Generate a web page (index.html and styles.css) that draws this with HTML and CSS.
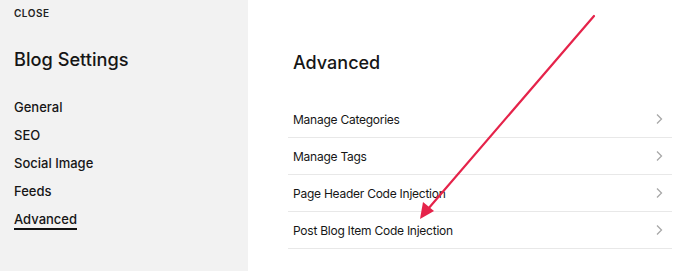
FILE: index.html
```html
<!DOCTYPE html>
<html>
<head>
<meta charset="utf-8">
<link rel="stylesheet" href="styles.css">
</head>
<body>
<div class="app">
  <aside class="side">
    <div class="close">CLOSE</div>
    <h1 class="side-title">Blog Settings</h1>
    <nav class="nav">
      <div class="nav-item">General</div>
      <div class="nav-item">SEO</div>
      <div class="nav-item">Social Image</div>
      <div class="nav-item">Feeds</div>
      <div class="nav-item active"><span>Advanced</span></div>
    </nav>
  </aside>
  <main class="main">
    <h2 class="main-title">Advanced</h2>
    <ul class="list">
      <li class="row"><span>Manage Categories</span><svg class="chev" viewBox="0 0 8 12" width="8" height="12"><path d="M2 1.5 L6.5 6 L2 10.5" fill="none" stroke="#a8a8a8" stroke-width="1.3"/></svg></li>
      <li class="row"><span>Manage Tags</span><svg class="chev" viewBox="0 0 8 12" width="8" height="12"><path d="M2 1.5 L6.5 6 L2 10.5" fill="none" stroke="#a8a8a8" stroke-width="1.3"/></svg></li>
      <li class="row"><span>Page Header Code Injection</span><svg class="chev" viewBox="0 0 8 12" width="8" height="12"><path d="M2 1.5 L6.5 6 L2 10.5" fill="none" stroke="#a8a8a8" stroke-width="1.3"/></svg></li>
      <li class="row"><span>Post Blog Item Code Injection</span><svg class="chev" viewBox="0 0 8 12" width="8" height="12"><path d="M2 1.5 L6.5 6 L2 10.5" fill="none" stroke="#a8a8a8" stroke-width="1.3"/></svg></li>
    </ul>
  </main>
  <svg class="arrow" width="700" height="271" viewBox="0 0 700 271">
    <line x1="594" y1="16" x2="428" y2="209" stroke="#e5234a" stroke-width="2.2" stroke-linecap="round"/>
    <path d="M420 219 L423 202 L434 211 Z" fill="#e5234a"/>
  </svg>
</div>
</body>
</html>
```
FILE: styles.css
```css
* { box-sizing: border-box; }
html, body { margin: 0; padding: 0; }
body {
  font-family: Inter, "Noto Sans", sans-serif;
  color: #161616;
  background: #fff;
  width: 700px;
  height: 271px;
  overflow: hidden;
}
.app {
  position: relative;
  display: flex;
  width: 700px;
  height: 271px;
}
.side {
  width: 248px;
  flex: none;
  background: #f2f2f2;
  padding: 7px 0 0 14px;
}
.close {
  font-size: 10px;
  font-weight: 600;
  letter-spacing: 0.5px;
  line-height: 12px;
  color: #222;
}
.side-title {
  margin: 28px 0 0;
  font-size: 18.2px;
  font-weight: 500;
  line-height: 24px;
}
.nav {
  margin-top: 27px;
  display: flex;
  flex-direction: column;
}
.nav-item {
  font-size: 13px;
  font-weight: 500;
  line-height: 18px;
  height: 28px;
}
.nav-item.active span {
  display: inline-block;
  border-bottom: 2px solid #111;
  padding-bottom: 0;
}
.main {
  flex: 1;
  padding: 51px 28px 0 40px;
}
.main-title {
  margin: 0 0 0 5px;
  font-size: 18px;
  font-weight: 500;
  line-height: 24px;
}
.list {
  list-style: none;
  margin: 26px 0 0;
  padding: 0;
}
.row {
  height: 37px;
  display: flex;
  align-items: center;
  justify-content: space-between;
  padding: 0 9px 0 5px;
  border-bottom: 1px solid #e8e8e8;
  font-size: 12px;
  letter-spacing: -0.25px;
  font-weight: 400;
}
.chev { display: block; }
.arrow {
  position: absolute;
  left: 0;
  top: 0;
  pointer-events: none;
}
```
